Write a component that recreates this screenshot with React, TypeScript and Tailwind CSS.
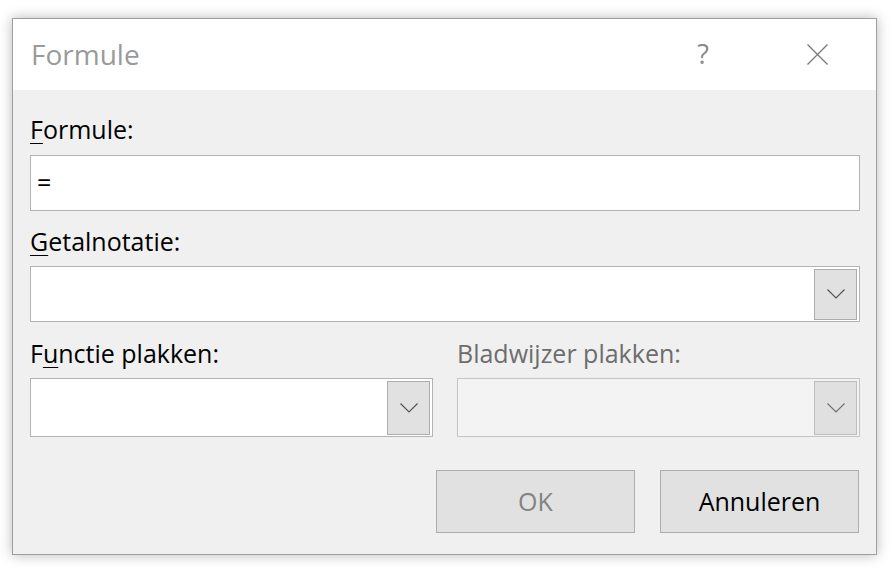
import React from 'react';

const FONT = "font-['Open_Sans','Noto_Sans',sans-serif]";

const Chevron = ({ disabled }: { disabled?: boolean }) => (
  <svg width="18" height="10" viewBox="0 0 18 10" fill="none">
    <path
      d="M0.5 0.5 L9 9 L17.5 0.5"
      stroke={disabled ? '#6e6e6e' : '#505050'}
      strokeWidth="1.1"
    />
  </svg>
);

const DropButton = ({ disabled, tall }: { disabled?: boolean; tall?: boolean }) => (
  <div
    className={`${tall ? 'h-[54px]' : 'h-[51px]'} w-[43px] mr-[2px] flex items-center justify-center border ${
      disabled ? 'bg-[#e0e0e0] border-[#bdbdbd]' : 'bg-[#e1e1e1] border-[#adadad]'
    }`}
  >
    <Chevron disabled={disabled} />
  </div>
);

const Label = ({ children, muted, className = '' }: { children: React.ReactNode; muted?: boolean; className?: string }) => (
  <div className={`text-[25px] leading-[32px] h-[32px] ${muted ? 'text-[#6d6d6d]' : 'text-black'} ${className}`}>
    {children}
  </div>
);

export default function App() {
  return (
    <div className={`w-[892px] h-[571px] bg-white pl-[12px] pt-[18px] ${FONT}`}>
      <div className="w-[865px] h-[537px] border border-[#9f9f9f] shadow-[0_0_12px_rgba(0,0,0,0.28)] flex flex-col">
        {/* title bar */}
        <div className="h-[71px] bg-white flex items-start pt-[15px] pl-[18px] pr-[48px]">
          <div className="text-[28px] leading-[40px] text-[#9a9a9a] flex-1">Formule</div>
          <div className="text-[27px] leading-[40px] text-[#8a8a8a] mr-[98px]">?</div>
          <svg width="21" height="21" viewBox="0 0 21 21" className="mt-[10px]">
            <path d="M0.5 0.5 L20.5 20.5 M20.5 0.5 L0.5 20.5" stroke="#7a7a7a" strokeWidth="1.3" />
          </svg>
        </div>

        {/* body */}
        <div className="flex-1 bg-[#f0f0f0] pl-[17px] pr-[16px] pt-[23px]">
          <Label>
            <span className="underline underline-offset-[4px] decoration-1">F</span>ormule:
          </Label>
          <div className="mt-[10px] h-[56px] bg-white border border-[#b4b4b4] flex items-center pl-[6px] text-[25px] text-black">
            =
          </div>

          <Label className="mt-[14px]">
            <span className="underline underline-offset-[4px] decoration-1">G</span>etalnotatie:
          </Label>
          <div className="mt-[9px] h-[56px] bg-white border border-[#b4b4b4] flex items-center justify-end">
            <DropButton />
          </div>

          <div className="mt-[15px] grid grid-cols-2 gap-x-[24px]">
            <div>
              <Label>
                F<span className="underline underline-offset-[4px] decoration-1">u</span>nctie plakken:
              </Label>
              <div className="mt-[9px] h-[59px] bg-white border border-[#b4b4b4] flex items-center justify-end">
                <DropButton tall />
              </div>
            </div>
            <div>
              <Label muted>Bladwijzer plakken:</Label>
              <div className="mt-[9px] h-[59px] bg-[#f3f3f3] border border-[#c4c4c4] flex items-center justify-end">
                <DropButton tall disabled />
              </div>
            </div>
          </div>

          <div className="mt-[33px] flex justify-end gap-[25px] pr-[1px]">
            <div className="w-[199px] h-[63px] bg-[#e1e1e1] border border-[#adadad] flex items-center justify-center text-[25px] text-[#838383]">
              OK
            </div>
            <div className="w-[199px] h-[63px] bg-[#e1e1e1] border border-[#adadad] flex items-center justify-center text-[25px] text-black">
              Annuleren
            </div>
          </div>
        </div>
      </div>
    </div>
  );
}
